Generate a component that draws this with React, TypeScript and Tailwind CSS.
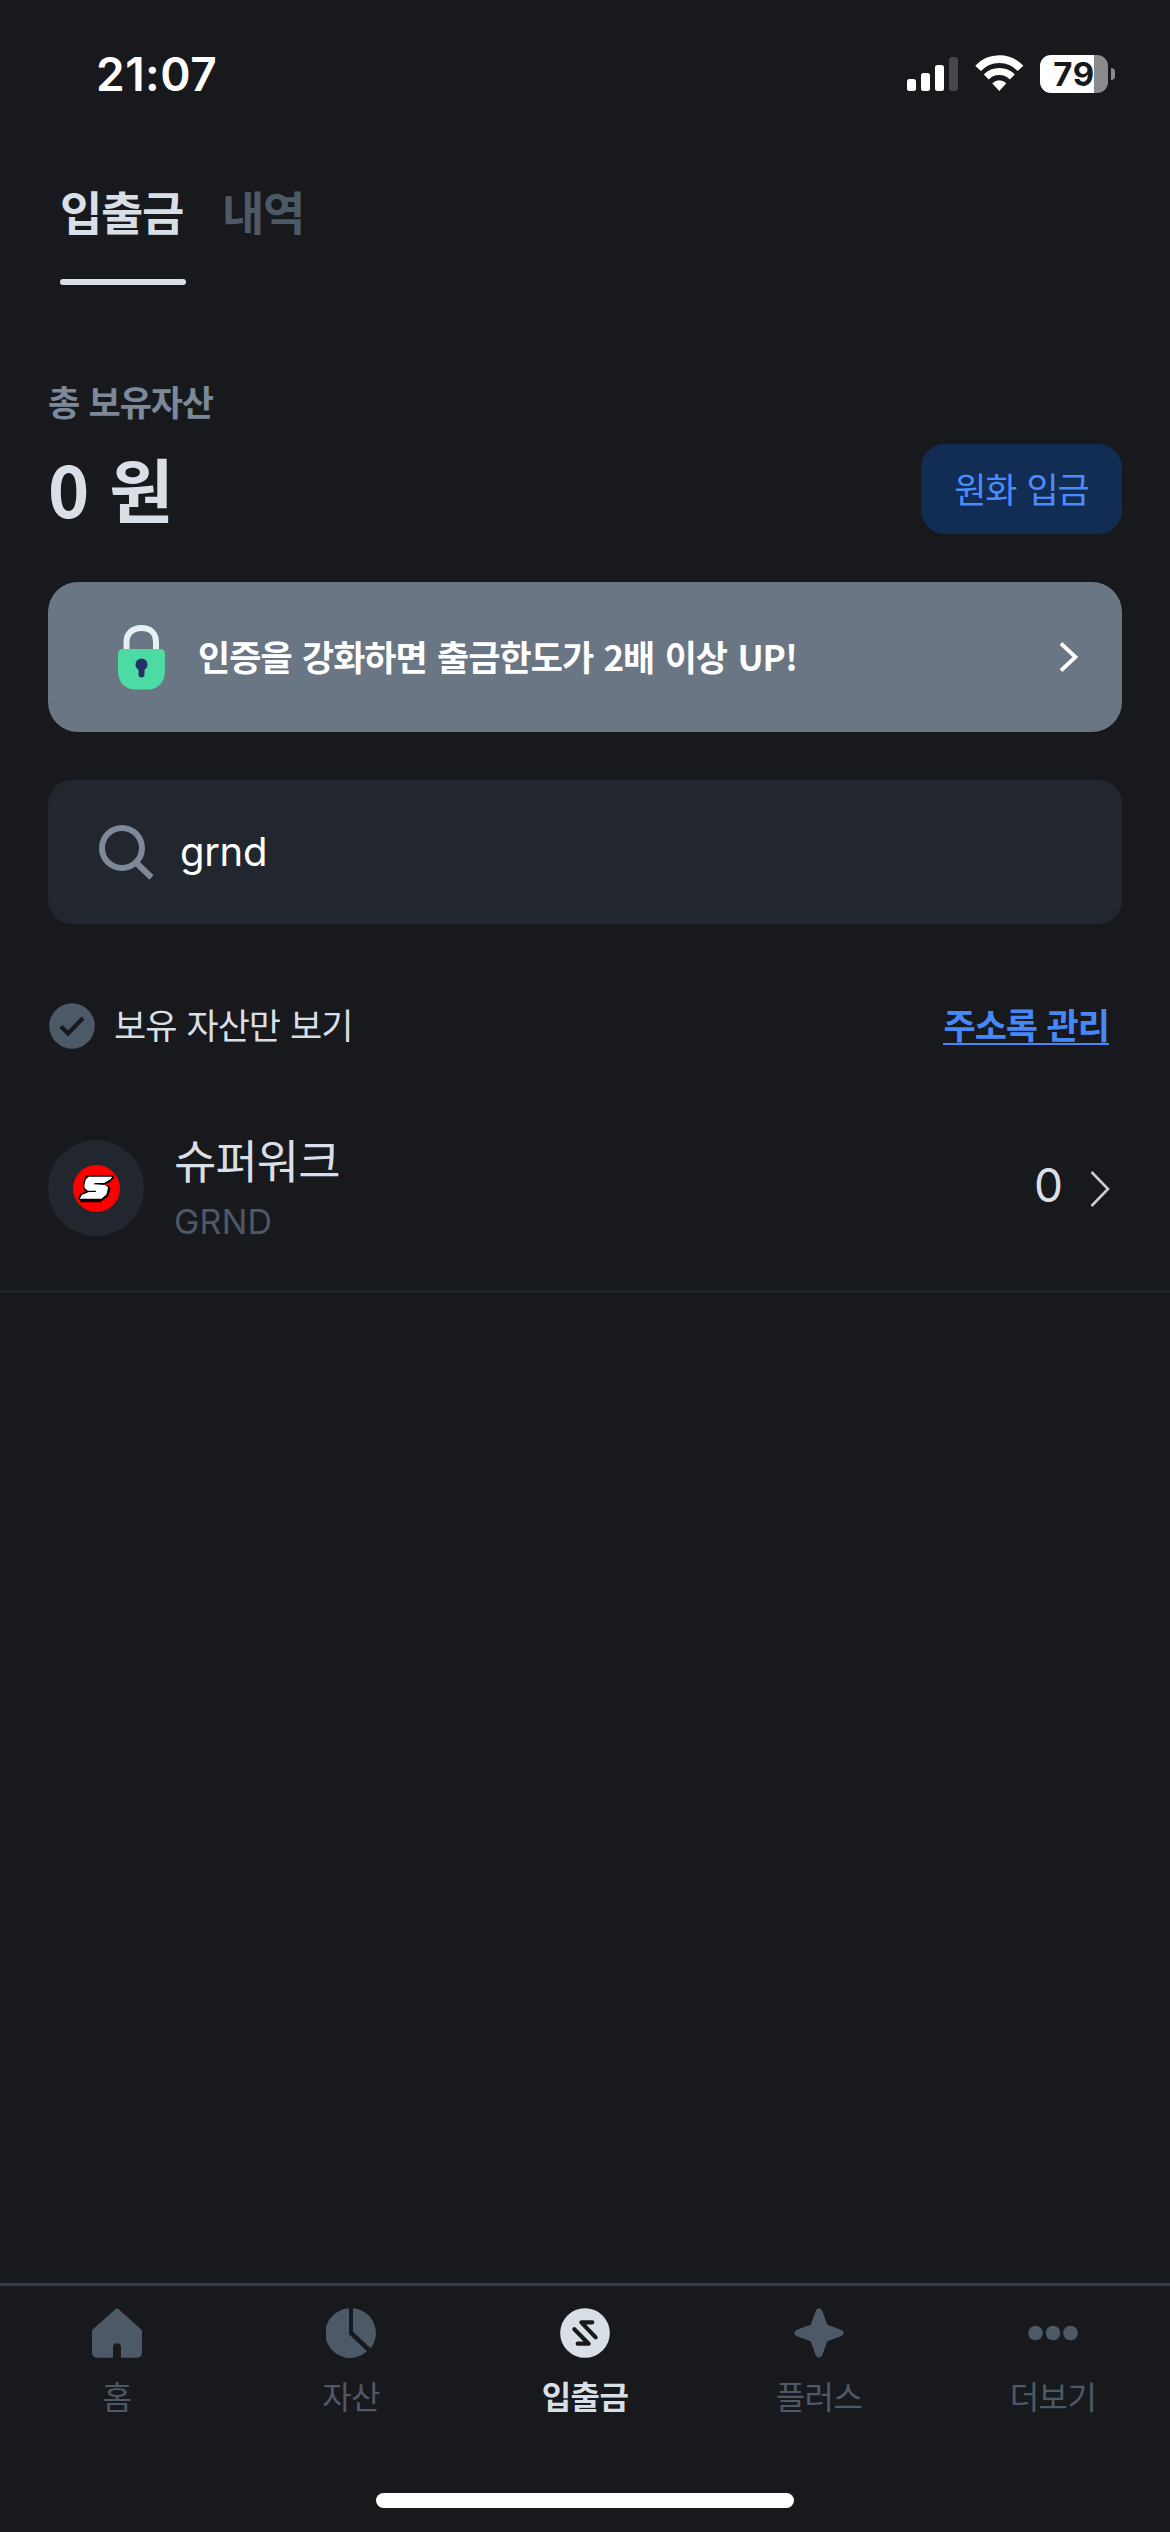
import React from "react";

function StatusBar() {
  return (
    <header className="flex h-[148px] shrink-0 items-center justify-between pr-[55px] pl-24 font-['Inter',sans-serif] text-white">
      <span className="text-[46px] leading-[56px] font-semibold tracking-[0.5px]">21:07</span>
      <div className="flex items-center">
        <svg className="mr-[17px] h-[38px] w-[51px]" viewBox="0 0 51 38">
          <rect x="0" y="24" width="9" height="12" rx="2.5" fill="#fff" />
          <rect x="14" y="18" width="9" height="18" rx="2.5" fill="#fff" />
          <rect x="28" y="10" width="9" height="26" rx="2.5" fill="#fff" />
          <rect x="42" y="2" width="9" height="34" rx="2.5" fill="#464749" />
        </svg>
        <svg className="mr-4 h-[38px] w-[49px]" viewBox="0 0 49 38" fill="none">
          <path d="M3.1 13.4A29 29 0 0 1 45.5 13.4" stroke="#fff" strokeWidth="7.8" />
          <path d="M11.3 21.9A18.4 18.4 0 0 1 37.3 21.9" stroke="#fff" strokeWidth="7" />
          <path d="M17.2 28.3Q24.3 22 31.4 28.3L24.3 36Z" fill="#fff" />
        </svg>
        <div className="flex h-[38px] w-[68px] items-center justify-center overflow-hidden rounded-[11px] bg-linear-to-r from-white from-[79.5%] to-[#8b8b8d] to-[79.5%]">
          <span className="text-[33px] leading-[38px] font-bold tracking-[0.5px] text-[#17191c]">79</span>
        </div>
        <div className="ml-[3px] h-3 w-1 rounded-r-full bg-[#8b8b8d]" />
      </div>
    </header>
  );
}

function Tabs() {
  return (
    <nav className="flex h-[137px] shrink-0 gap-9 pt-[30px] pl-[60px] text-[46px] leading-[64px] font-bold tracking-[-1.3px]">
      <div className="flex w-[126px] flex-col justify-between whitespace-nowrap text-[#d9dfe6]">
        <span>입출금</span>
        <div className="h-1.5 rounded-full bg-[#d9dfe6]" />
      </div>
      <span className="text-[#4e5968]">내역</span>
    </nav>
  );
}

function LockIcon() {
  return (
    <svg className="h-[65px] w-[47px]" viewBox="0 0 47 65">
      <path d="M8.5 27V17C8.5 8.5 14.5 3 23.5 3S38 8.5 38 17V27" fill="none" stroke="#e8eff5" strokeWidth="6" />
      <path d="M5 24H42Q47 24 47 29V46C47 57 40 64.5 30 64.5H17C7 64.5 0 57 0 46V29Q0 24 5 24Z" fill="#4cdba3" />
      <circle cx="23.5" cy="39.5" r="6" fill="#253166" />
      <path d="M23.5 41V49.5" stroke="#253166" strokeWidth="6" strokeLinecap="round" />
    </svg>
  );
}

function CoinLogo() {
  return (
    <svg className="size-[47px]" viewBox="219 254 139 139">
      <circle cx="288.5" cy="323.5" r="69.5" fill="#ff0000" />
      <path d="M256 285H341L339 293L325 307L310 311L326 316L330 326L322 347L299 364H240V357L234 354L241 339L258 332L249 325V313L254 292Z" fill="#000" />
      <path d="M265 289H335L330 296L311 307H284L280 311L314 313L323 320L318 341L303 354H239L245 343L266 334H286L288 330H263L253 322V312L257 296Z" fill="#fff" />
    </svg>
  );
}

function HomeIcon() {
  return (
    <svg className="size-[50px]" viewBox="273 142 150 150" fill="#4e5968">
      <path d="M343 146Q348 141 353 146L420 206Q423 209 423 213V275Q423 291 407 291H360V260Q360 248 348 248T336 260V291H289Q273 291 273 275V213Q273 209 276 206Z" />
    </svg>
  );
}

function PieIcon() {
  return (
    <svg className="size-[50px]" viewBox="978 142 150 150" fill="#4e5968">
      <path d="M1047 143V221L1101 272A74.5 74.5 0 1 1 1047 143Z" />
      <path d="M1059 143V213L1112 263A74.5 74.5 0 0 0 1059 143Z" />
    </svg>
  );
}

function TransferIcon() {
  return (
    <svg className="size-[50px]" viewBox="420 142 150 150">
      <circle cx="495" cy="217" r="74.5" fill="#d9dfe6" />
      <g fill="none" stroke="#17191c" strokeWidth="12.5" strokeLinecap="round" strokeLinejoin="round">
        <path d="M517 185H484L527 230" />
        <path d="M463 206L506 249H473" />
      </g>
    </svg>
  );
}

function PlusIcon() {
  return (
    <svg className="size-[50px]" viewBox="1122 142 150 150" fill="#4e5968">
      <path d="M1187 151Q1190 143 1197 143T1207 151L1222 192L1263 207Q1271 210 1271 217T1263 227L1222 242L1207 283Q1204 291 1197 291T1187 283L1172 242L1131 227Q1123 224 1123 217T1131 207L1172 192Z" />
    </svg>
  );
}

function MoreIcon() {
  return (
    <svg className="size-[50px]" viewBox="384 142 150 150" fill="#4e5968">
      <circle cx="406.5" cy="217" r="22" />
      <circle cx="459" cy="217" r="22" />
      <circle cx="511.5" cy="217" r="22" />
    </svg>
  );
}

const navItems = [
  { label: "홈", Icon: HomeIcon, active: false },
  { label: "자산", Icon: PieIcon, active: false },
  { label: "입출금", Icon: TransferIcon, active: true },
  { label: "플러스", Icon: PlusIcon, active: false },
  { label: "더보기", Icon: MoreIcon, active: false },
];

function BottomNav() {
  return (
    <footer className="mt-auto h-[249px] shrink-0 border-t-[3px] border-[#343c4b] pt-[22px]">
      <div className="grid grid-cols-5">
        {navItems.map(({ label, Icon, active }) => (
          <div key={label} className="flex flex-col items-center gap-[17px]">
            <Icon />
            <span
              className={
                active
                  ? "text-[32px] leading-10 font-bold tracking-[-0.6px] text-[#d9dfe6]"
                  : "text-[32px] leading-10 font-normal tracking-[-0.6px] text-[#4e5968]"
              }
            >
              {label}
            </span>
          </div>
        ))}
      </div>
      <div className="mx-auto mt-[78px] h-[15px] w-[418px] rounded-full bg-white" />
    </footer>
  );
}

export default function App() {
  return (
    <div className="flex h-[2532px] w-[1170px] flex-col overflow-hidden bg-[#17191c] font-['Noto_Sans_CJK_KR',sans-serif]">
      <StatusBar />
      <Tabs />

      <main className="flex flex-col px-12 pt-[91px]">
        <section className="flex items-end justify-between">
          <div className="pb-1">
            <p className="text-[35px] leading-[50px] font-bold tracking-[-1.1px] text-[#7d8998] [word-spacing:2.6px]">총 보유자산</p>
            <p className="mt-5 text-[70px] leading-[84px] font-bold text-[#d9dfe6] [word-spacing:4px]">0 원</p>
          </div>
          <button className="h-[90px] w-[201px] rounded-[24px] bg-[#122d54] pb-[3px] text-[35px] leading-[50px] tracking-[-1px] text-[#4a8cff] [word-spacing:3px]">
            원화 입금
          </button>
        </section>

        <section className="mt-12 flex h-[150px] items-center rounded-[30px] bg-[#6b7684] pr-11 pl-[70px]">
          <LockIcon />
          <span className="-mt-0.5 ml-[33px] text-[35px] leading-[50px] font-bold tracking-[-1px] whitespace-nowrap text-white [word-spacing:3.4px]">
            인증을 강화하면 출금한도가 2배 이상 UP!
          </span>
          <svg className="ml-auto h-[30px] w-5" viewBox="0 0 20 30" fill="none">
            <path d="M3 1.5L17.5 15L3 28.5" stroke="#fff" strokeWidth="3.8" />
          </svg>
        </section>

        <section className="mt-12 flex h-36 items-center rounded-[24px] bg-[#22262e] pl-[51px]">
          <svg className="size-[55px]" viewBox="0 0 55 55" fill="none" stroke="#7d8998" strokeWidth="6">
            <circle cx="23" cy="23" r="20" />
            <path d="M37.5 38L52.5 52.5" />
          </svg>
          <span className="ml-[26px] font-['Inter',sans-serif] text-[40px] leading-[48px] tracking-[-0.3px] text-white">grnd</span>
        </section>

        <section className="mt-[79px] flex h-[46px] justify-between">
          <div className="flex items-center gap-[18px]">
            <svg className="h-[46px] w-12" viewBox="0 0 48 46" fill="none">
              <circle cx="24" cy="23" r="22.8" fill="#4e5968" />
              <path d="M13 23.5L20 30.5L35 15" stroke="#17191c" strokeWidth="4.2" />
            </svg>
            <span className="-mt-1 text-[35px] leading-[46px] tracking-[-1px] text-[#d9dfe6] [word-spacing:3.2px]">보유 자산만 보기</span>
          </div>
          <a className="mt-0.5 mr-[13px] h-10 border-b-2 border-[#4788f8] text-[35px] leading-[38px] font-bold tracking-[-1px] text-[#4788f8] [word-spacing:2.6px]">
            주소록 관리
          </a>
        </section>
      </main>

      <section className="mt-[91px] flex h-[153px] shrink-0 items-start border-b-[3px] border-[#20262c] px-12">
        <div className="flex size-24 items-center justify-center rounded-full bg-[#22262e]">
          <CoinLogo />
        </div>
        <div className="-mt-2.5 ml-[30px] flex flex-col">
          <span className="text-[46px] leading-[56px] tracking-[-0.9px] text-[#d9dfe6]">슈퍼워크</span>
          <span className="mt-4 font-['Inter',sans-serif] text-[34px] leading-[40px] tracking-[0.2px] text-[#4e5968]">GRND</span>
        </div>
        <div className="mr-3 ml-auto flex h-[98px] items-center">
          <span className="-mt-2 font-['Inter',sans-serif] text-[46px] leading-[56px] text-[#d9dfe6]">0</span>
          <svg className="ml-[27px] h-9 w-5" viewBox="0 0 20 36" fill="none">
            <path d="M1.5 1L18 18L1.5 35" stroke="#c9ccd0" strokeWidth="2.6" />
          </svg>
        </div>
      </section>

      <BottomNav />
    </div>
  );
}
